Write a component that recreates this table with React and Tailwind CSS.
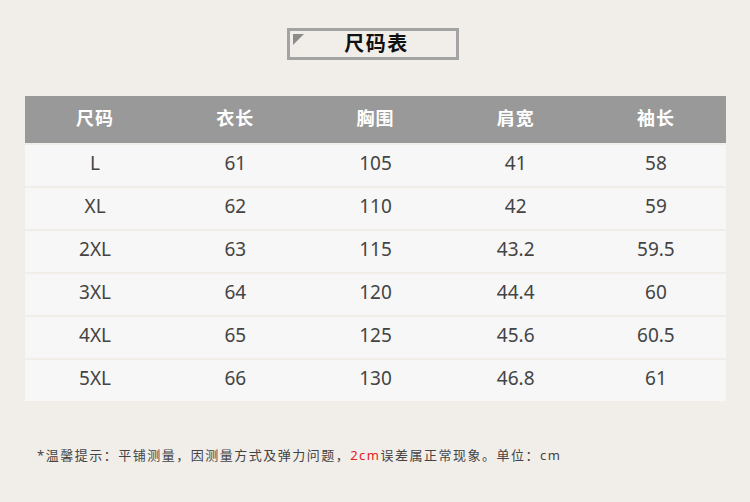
const headers = ['尺码', '衣长', '胸围', '肩宽', '袖长'];

const rows = [
  ['L', '61', '105', '41', '58'],
  ['XL', '62', '110', '42', '59'],
  ['2XL', '63', '115', '43.2', '59.5'],
  ['3XL', '64', '120', '44.4', '60'],
  ['4XL', '65', '125', '45.6', '60.5'],
  ['5XL', '66', '130', '46.8', '61'],
];

const font = { fontFamily: '"Noto Sans", "Noto Sans CJK SC", sans-serif' };

export default function App() {
  return (
    <div className="w-[750px] h-[502px] bg-[#f1eeea] overflow-hidden" style={font}>
      <div className="flex justify-center pt-[28px] pr-[4px]">
        <div className="relative w-[172px] h-[32px] border-[3px] border-[#a3a3a3] flex items-center justify-center">
          <div className="absolute left-[3px] top-[3px] w-0 h-0 border-t-[11px] border-t-[#8c8c8c] border-r-[11px] border-r-transparent" />
          <span className="text-[20px] font-bold text-[#111] tracking-[1.5px] leading-none pl-[7px]">尺码表</span>
        </div>
      </div>

      <div className="mx-[25px] mt-[36px] w-[701px] flex flex-col gap-[2px]">
        <div className="grid grid-cols-5 h-[47px] bg-[#999999] items-center pb-[2px]">
          {headers.map((h) => (
            <div key={h} className="text-center text-white font-bold text-[18px] tracking-[1px]">
              {h}
            </div>
          ))}
        </div>
        {rows.map((r) => (
          <div key={r[0]} className="grid grid-cols-5 h-[41px] bg-[#f7f7f7] items-center pb-[4px]">
            {r.map((c, i) => (
              <div key={i} className="text-center text-[#444] text-[19px]">
                {c}
              </div>
            ))}
          </div>
        ))}
      </div>

      <p className="mt-[45px] ml-[37px] text-[13px] text-[#444] tracking-[1.5px]">
        *温馨提示：平铺测量，因测量方式及弹力问题，<span className="text-[#e5201e]">2cm</span>误差属正常现象。单位：cm
      </p>
    </div>
  );
}
